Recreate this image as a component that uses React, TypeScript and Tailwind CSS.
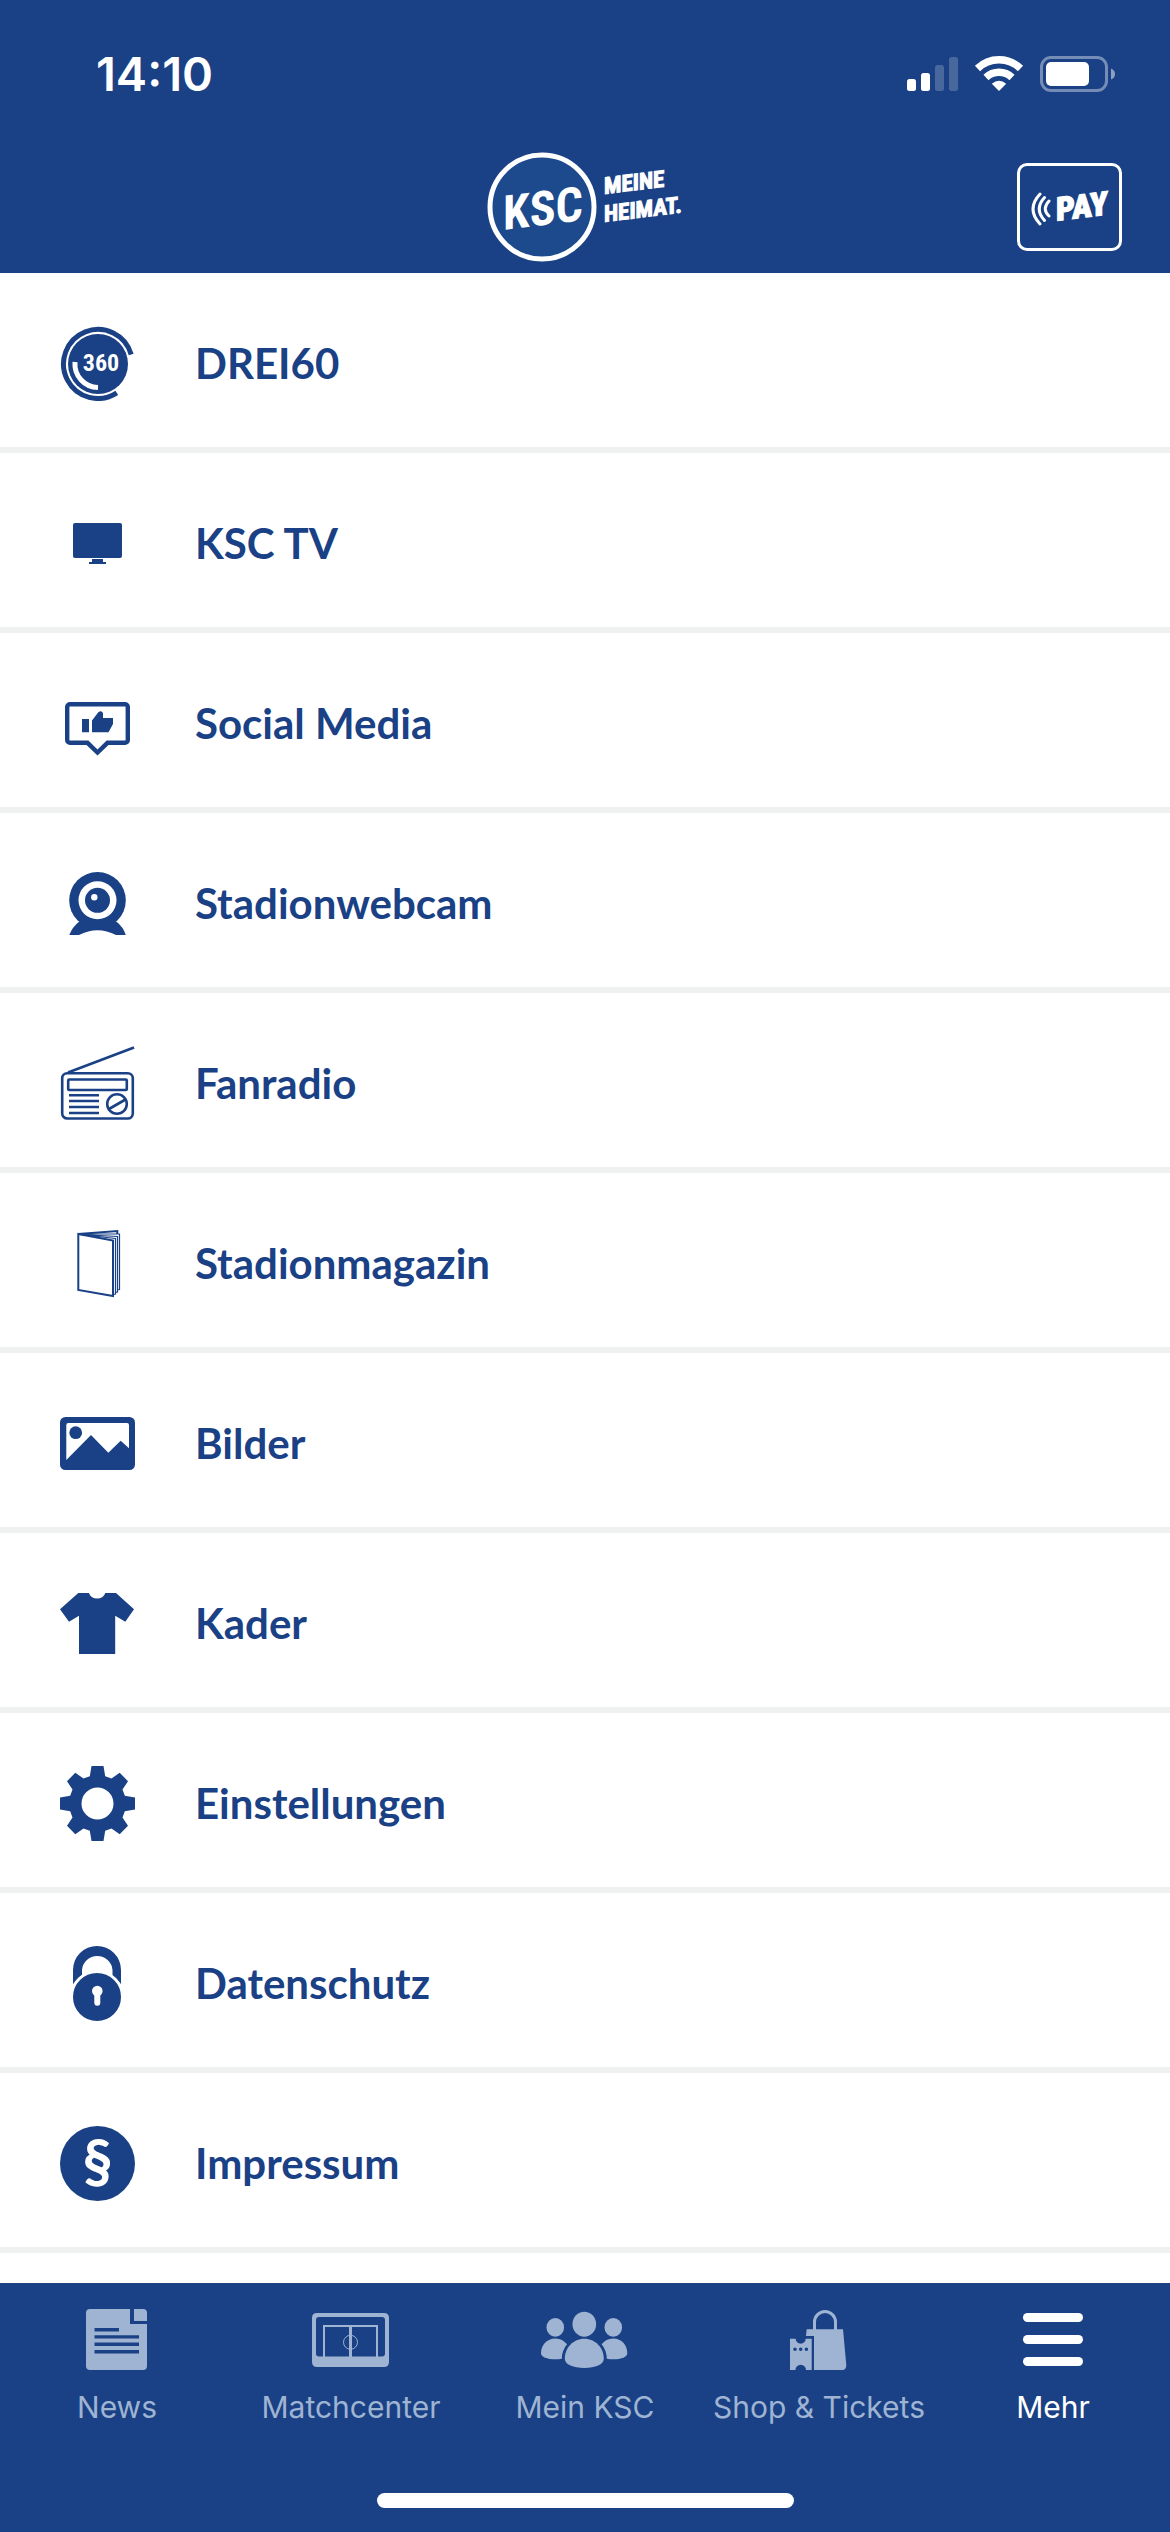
import type { ReactNode } from "react";

const CONDENSED = "'Roboto Condensed', 'Liberation Sans Narrow', 'Liberation Sans', sans-serif";

const MENU: { label: string; href: string; icon: ReactNode }[] = [
  {
    label: "DREI60",
    href: "#drei60",
    icon: (
      <>
        <path d="M71.2 28.5A34.5 34.5 0 1 0 56.8 66.9" fill="none" stroke="currentColor" strokeWidth="5" />
        <circle cx="38" cy="38" r="30" />
        <path d="M15 36A23.5 23.5 0 0 0 38 61.5" fill="none" stroke="#fff" strokeWidth="5" />
        <text x="41" y="45" textAnchor="middle" fill="#fff" fontSize="24" fontWeight="700" fontFamily={CONDENSED}>
          360
        </text>
      </>
    ),
  },
  {
    label: "KSC TV",
    href: "#tv",
    icon: (
      <>
        <rect x="13" y="17" width="49" height="35" rx="2" />
        <path d="M32 53h11v3h3v2H29v-2h3z" />
      </>
    ),
  },
  {
    label: "Social Media",
    href: "#social",
    icon: (
      <>
        <path
          d="M10 18.2H65a2.8 2.8 0 0 1 2.8 2.8V54a2.8 2.8 0 0 1-2.8 2.8H47.5L37.5 66.5 27.5 56.8H10A2.8 2.8 0 0 1 7.2 54V21A2.8 2.8 0 0 1 10 18.2Z"
          fill="none"
          stroke="currentColor"
          strokeWidth="4.4"
        />
        <path d="M22 33h7v13.3h-7zM32 34.5l6.500-8.500q3-2 4.500 1V32h10v6l-4.500 8.300H32z" />
      </>
    ),
  },
  {
    label: "Stadionwebcam",
    href: "#webcam",
    icon: (
      <>
        <path d="M9.300 69q3-8 10-13.500h37q7 5.500 9.500 13.500H56Q37.500 59.500 19 69z" />
        <circle cx="37.500" cy="34.300" r="28.300" />
        <circle cx="37.500" cy="34.300" r="19" fill="#fff" />
        <circle cx="37.500" cy="34.300" r="12.500" />
        <circle cx="34.300" cy="31.300" r="3.200" fill="#fff" />
      </>
    ),
  },
  {
    label: "Fanradio",
    href: "#radio",
    icon: (
      <g fill="none" stroke="currentColor" strokeWidth="2.600">
        <rect x="2.200" y="27.200" width="70.600" height="45.300" rx="5" />
        <rect x="8.200" y="33.500" width="58.600" height="10.500" rx="1" />
        <path d="M8 26.500L74 1.500M9 49.300h30M9 55h30M9 61h30M9 67h30M49 63l16.500-9.500" />
        <circle cx="57" cy="58" r="9.800" />
      </g>
    ),
  },
  {
    label: "Stadionmagazin",
    href: "#magazin",
    icon: (
      <g fill="none" stroke="currentColor">
        <path d="M18.300 8V64L53 70V14.500z" strokeWidth="2" />
        <path d="M18.300 8L57.300 5V8" strokeWidth="2" />
        <path
          d="M20 8L59.500 8V63.500L57 64M20 8.500L57.500 10.500V66L55.500 66.500M20 8.500L55.500 12.500V68L53.500 68.500"
          strokeWidth="1.200"
        />
      </g>
    ),
  },
  {
    label: "Bilder",
    href: "#bilder",
    icon: (
      <>
        <rect x="0" y="11" width="75" height="53" rx="5.500" />
        <path d="M6.300 54V19q0-2 2-2H67q2 0 2 2V42.300l-8.300-7.600L48.300 46.700 31 29z" fill="#fff" />
        <circle cx="15.700" cy="26.700" r="6.400" />
      </>
    ),
  },
  {
    label: "Kader",
    href: "#kader",
    icon: (
      <path d="M18.300 7H29a8.200 6.500 0 0 0 16.200 0H56L74 23.300 65.300 35.700 55.200 29.700V68H19V29.700L9 35.700 0 23.300z" />
    ),
  },
  {
    label: "Einstellungen",
    href: "#einstellungen",
    icon: (
      <path
        fillRule="evenodd"
        d="M31.500 0H43.500L45.200 10.200 51.500 12.500 59.700 6.800 68 15.200 62.500 23.500 64.800 29.700 75 31.500V43.500L64.800 45.300 62.500 51.500 68 59.800 59.700 68.200 51.500 62.500 45.200 64.800 43.500 75H31.500L29.800 64.800 23.500 62.500 15.300 68.200 7 59.800 12.500 51.500 10.200 45.300 0 43.500V31.500L10.200 29.700 12.500 23.500 7 15.200 15.300 6.800 23.500 12.500 29.800 10.200ZM37.500 21.500a16 16 0 1 0 0 32 16 16 0 1 0 0-32Z"
      />
    ),
  },
  {
    label: "Datenschutz",
    href: "#datenschutz",
    icon: (
      <>
        <path d="M13 38V24a24 24 0 0 1 48 0V38L52.500 31V24a15.300 15.300 0 0 0-30.500 0V31z" />
        <circle cx="37" cy="51" r="25.500" stroke="#fff" strokeWidth="3" />
        <circle cx="37.300" cy="45" r="5.300" fill="#fff" />
        <path d="M37.300 46v10.700" stroke="#fff" strokeWidth="6" strokeLinecap="round" />
      </>
    ),
  },
  {
    label: "Impressum",
    href: "#impressum",
    icon: (
      <>
        <circle cx="37.500" cy="37.500" r="37.500" />
        <text
          x="37.500"
          y="56"
          textAnchor="middle"
          fill="#fff"
          stroke="#fff"
          strokeWidth="2"
          fontSize="58"
          fontFamily="Lato, sans-serif"
        >
          §
        </text>
      </>
    ),
  },
];

const TABS: { label: string; href: string; active?: boolean; icon: ReactNode }[] = [
  {
    label: "News",
    href: "#news",
    icon: (
      <>
        <path
          fillRule="evenodd"
          d="M18 7H58V22H75V64q0 4-4 4H18q-4 0-4-4V11q0-4 4-4ZM22.500 26v3.400H47V26ZM22.500 33.200v3.400H67v-3.400ZM22.500 40.500v3.400H67v-3.400ZM22.500 48v3.400H67V48Z"
        />
        <path d="M62 7h9q4 0 4 4v8H62z" />
      </>
    ),
  },
  {
    label: "Matchcenter",
    href: "#matchcenter",
    icon: (
      <>
        <path
          fillRule="evenodd"
          d="M11 11H78q5 0 5 5V60q0 5-5 5H11q-5 0-5-5V16q0-5 5-5ZM13 15q-3 0-3 3V51.500q0 3 3 3H76q3 0 3-3V18q0-3-3-3Z"
        />
        <path d="M18 55V24H71V55" fill="none" stroke="currentColor" strokeWidth="2" />
        <path d="M44.500 24V55" stroke="currentColor" strokeWidth="3" />
        <circle cx="44.500" cy="40.300" r="7" fill="none" stroke="currentColor" />
      </>
    ),
  },
  {
    label: "Mein KSC",
    href: "#mein-ksc",
    icon: (
      <>
        <ellipse cx="44.300" cy="22.200" rx="11.800" ry="12.500" />
        <path d="M44.300 36.800c11 0 19.500 9 19.500 20 0 6-8.500 9.200-19.500 9.200s-19.500-3.200-19.500-9.200c0-11 8.500-20 19.500-20z" />
        <ellipse cx="15.300" cy="25.400" rx="8.800" ry="9.300" />
        <ellipse cx="73.300" cy="25.400" rx="8.800" ry="9.300" />
        <path d="M15.300 36.400c5 0 9 2.200 11.700 5.800q-5 6-5.200 14.500-3 .6-6.500.6C7 57.300 1 55 1 51c0-8 6-14.600 14.300-14.600z" />
        <path d="M73.300 36.400c-5 0-9 2.200-11.700 5.800q5 6 5.200 14.500 3 .6 6.500.6c8.300 0 14-2.300 14-6.300 0-8-5.700-14.600-14-14.600z" />
      </>
    ),
  },
  {
    label: "Shop & Tickets",
    href: "#shop",
    icon: (
      <>
        <path d="M40.500 28V20a10.500 10.500 0 0 1 21 0V28" fill="none" stroke="currentColor" strokeWidth="3" />
        <path d="M32.700 27.300H69L72.300 63q0 5-4 5H40V34H32z" />
        <path
          fillRule="evenodd"
          d="M16 36.700h5.700a5 5 0 0 0 10 0h6V68H32a5 5 0 0 0-10.600 0H16ZM21 45.500a1.800 1.800 0 1 0 0 3.600 1.800 1.800 0 0 0 0-3.600ZM26.700 45.500a1.800 1.800 0 1 0 0 3.600 1.800 1.800 0 0 0 0-3.600ZM32.400 45.500a1.800 1.800 0 1 0 0 3.600 1.800 1.800 0 0 0 0-3.600Z"
        />
      </>
    ),
  },
  {
    label: "Mehr",
    href: "#mehr",
    active: true,
    icon: (
      <>
        <rect x="15" y="11" width="60" height="9" rx="4.500" />
        <rect x="15" y="33" width="60" height="9" rx="4.500" />
        <rect x="15" y="55" width="60" height="9" rx="4.500" />
      </>
    ),
  },
];

function StatusBar() {
  return (
    <div className="flex h-[141px] items-center justify-between pt-[7px] pr-[54px] pl-24">
      <time className="font-[Inter,sans-serif] text-[47px] font-semibold">14:10</time>
      <svg className="h-[38px] w-[210px]" viewBox="906 55 210 38" fill="#fff" role="img" aria-label="Empfang, WLAN, Akku">
        <rect x="907" y="79" width="9" height="12" rx="2.500" />
        <rect x="921" y="73" width="9" height="18" rx="2.500" />
        <rect x="935" y="65" width="9" height="26" rx="2.500" opacity=".2" />
        <rect x="949" y="57" width="9" height="34" rx="2.500" opacity=".2" />
        <path d="M977.500 68.500a31 31 0 0 1 43 0M986 77.500a19 19 0 0 1 26 0" fill="none" stroke="#fff" strokeWidth="7.500" />
        <path d="M999 91l-7.200-7.200q7.200-6 14.400 0z" />
        <rect x="1041.500" y="57.500" width="65" height="33" rx="9.500" fill="none" stroke="#fff" strokeWidth="3" opacity=".4" />
        <rect x="1046" y="62" width="43" height="24" rx="5" />
        <path d="M1111 68.500q4 1.500 4 5.500t-4 5.500z" opacity=".5" />
      </svg>
    </div>
  );
}

function ClubLogo() {
  return (
    <svg className="h-[110px] w-[196px]" viewBox="0 0 196 110" fill="#fff" fontFamily={CONDENSED} fontWeight="700">
      <circle cx="55" cy="55" r="52" fill="#1d4a8c" stroke="#fff" strokeWidth="5" />
      <g transform="translate(56 73) skewY(-7)">
        <text textAnchor="middle" fontSize="48">
          KSC
        </text>
      </g>
      <g transform="translate(117 42) skewY(-7)" stroke="#fff">
        <text fontSize="23">MEINE</text>
      </g>
      <g transform="translate(117 70) skewY(-7)" stroke="#fff">
        <text fontSize="23">HEIMAT.</text>
      </g>
    </svg>
  );
}

function PayButton() {
  return (
    <button
      type="button"
      className="flex h-[88px] w-[105px] items-center justify-center justify-self-end rounded-[10px] border-[3px] border-white"
    >
      <svg className="h-12 w-20" viewBox="0 0 80 48" fill="#fff" fontFamily={CONDENSED} fontWeight="900">
        <path
          d="M10 11q-14 15 0 30M14.500 14.500q-10.500 11.500 0 23M19 18q-7.500 8 0 15"
          fill="none"
          stroke="#fff"
          strokeWidth="3"
          strokeLinecap="round"
        />
        <g transform="translate(26 38) skewY(-7)" stroke="#fff">
          <text fontSize="33">PAY</text>
        </g>
      </svg>
    </button>
  );
}

export default function App() {
  return (
    <div className="flex min-h-screen flex-col bg-white font-[Lato,sans-serif] text-[#1a4185]">
      <header className="bg-[#1a4185] text-white">
        <StatusBar />
        <div className="grid h-[132px] grid-cols-[1fr_auto_1fr] items-center px-12">
          <span />
          <ClubLogo />
          <PayButton />
        </div>
      </header>

      <nav className="flex-1" aria-label="Menü">
        {MENU.map((item) => (
          <a
            key={item.href}
            href={item.href}
            className="flex h-[180px] items-center gap-[60px] border-b-[6px] border-[#eff1f0] px-[60px] pt-[7px]"
          >
            <svg className="size-[75px] shrink-0" viewBox="0 0 75 75" fill="currentColor" aria-hidden="true">
              {item.icon}
            </svg>
            <span className="text-[42px] font-bold">{item.label}</span>
          </a>
        ))}
      </nav>

      <footer className="flex h-[249px] flex-col items-center justify-between bg-[#1a4185] pt-[19px] pb-6">
        <nav className="grid w-full grid-cols-5 font-[Inter,sans-serif] text-[30px]" aria-label="Tabs">
          {TABS.map((tab) => (
            <a
              key={tab.href}
              href={tab.href}
              aria-current={tab.active ? "page" : undefined}
              className={`flex flex-col items-center gap-2 whitespace-nowrap ${tab.active ? "text-white" : "text-[#9fb4d2]"}`}
            >
              <svg className="h-[75px] w-[90px]" viewBox="0 0 90 75" fill="currentColor" aria-hidden="true">
                {tab.icon}
              </svg>
              {tab.label}
            </a>
          ))}
        </nav>
        <div className="h-[15px] w-[417px] rounded-full bg-white" />
      </footer>
    </div>
  );
}
